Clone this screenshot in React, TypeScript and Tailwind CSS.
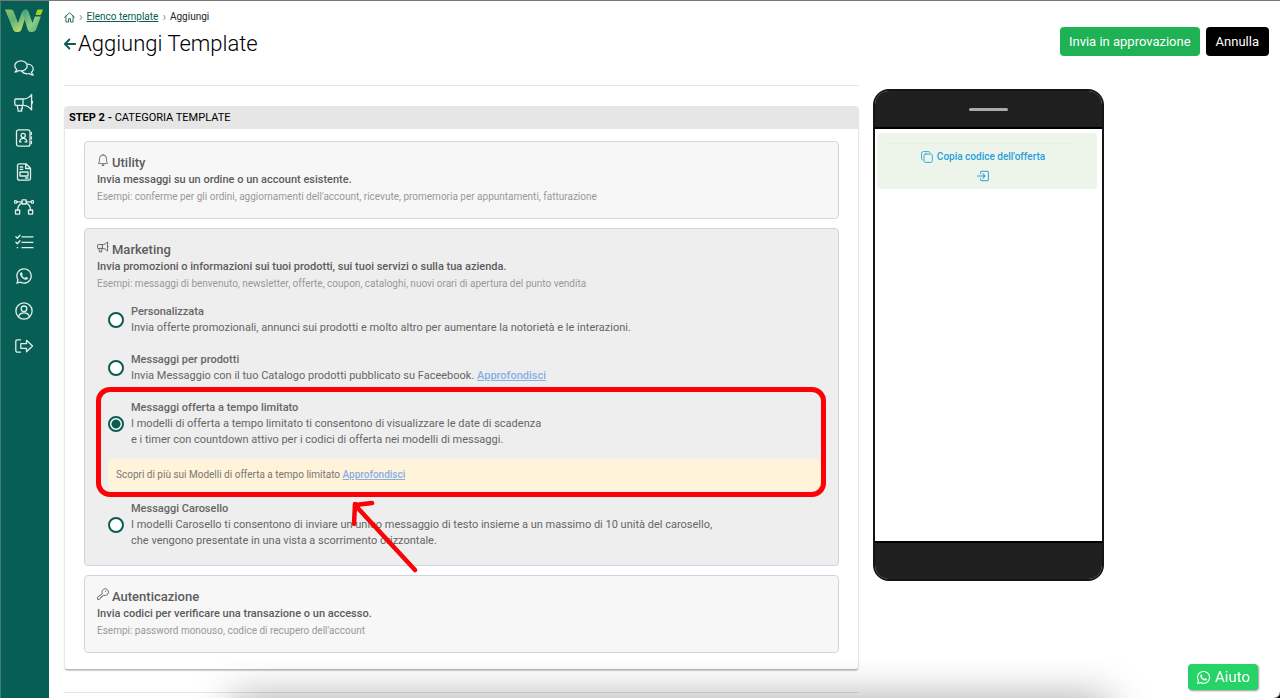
import type { ReactNode } from 'react';
import { FaWhatsapp } from 'react-icons/fa';
import { BsBell } from 'react-icons/bs';

function Glyph({ children, className }: { children: ReactNode; className: string }) {
  return (
    <svg viewBox="0 0 20 20" fill="none" stroke="currentColor" strokeLinecap="round" strokeLinejoin="round" className={className} aria-hidden="true">
      {children}
    </svg>
  );
}

const line = 'size-5 stroke-[1.3]';

function Megaphone({ className }: { className: string }) {
  return (
    <Glyph className={className}>
      <path d="M9 6H1.800a1 1 0 0 0-1 1v4.300a1 1 0 0 0 1 1H9M9 6v6.300M9 6c3.300 0 6.600-1.600 8.600-4.500v15.400c-2-2.900-5.300-4.600-8.600-4.600M17.600 7.500c1.200.4 1.200 2.800 0 3.200M3.200 12.400l1 5.800h3.500l-.5-2.400h1.200l-.3-3.400" />
    </Glyph>
  );
}

const menu: { label: string; icon: ReactNode }[] = [
  {
    label: 'Conversazioni',
    icon: (
      <Glyph className={line}>
        <path d="M1 14c1-.8 1.500-1.600 1.700-2.600C1.500 10.400.8 9.200.8 7.800.8 4.900 3.600 2.800 7 2.800s6.200 2.100 6.200 5-2.800 5-6.200 5c-.8 0-1.500-.1-2.200-.3C3.700 13.400 2.400 14 1 14Z" />
        <path d="M13.800 6.200c3 .2 5.400 2.100 5.400 4.700 0 1.300-.6 2.500-1.700 3.400.2 1 .8 1.900 1.700 2.700-1.500 0-2.900-.6-4-1.500-.7.2-1.300.3-2 .3-2.400 0-4.400-1-5.400-2.700" />
      </Glyph>
    ),
  },
  { label: 'Campagne', icon: <Megaphone className={line} /> },
  {
    label: 'Contatti',
    icon: (
      <Glyph className={line}>
        <rect x="2.500" y="1.800" width="13.500" height="16.400" rx="2" />
        <circle cx="9.200" cy="7.500" r="2.100" />
        <path d="M5.600 13.800c.3-2.300 1.600-3.500 3.600-3.500s3.400 1.200 3.700 3.500h-2M5.600 13.800h1.600M17.400 4.500v2M17.400 9v2M17.400 13.500v2" />
      </Glyph>
    ),
  },
  {
    label: 'Template',
    icon: (
      <Glyph className={line}>
        <path d="M5 1.800h7l4.500 4.400v10.300a1.700 1.700 0 0 1-1.700 1.700H5.200a1.700 1.700 0 0 1-1.700-1.700V3.500A1.700 1.700 0 0 1 5 1.800ZM11.700 2v4.500h4.600M6.200 5h2.500M6.200 7.400h2.500M6 10h8v4H6zM11.500 16h2.500" />
      </Glyph>
    ),
  },
  {
    label: 'Flussi',
    icon: (
      <Glyph className={line}>
        <rect x="8" y="2.800" width="4.200" height="4.200" rx=".5" />
        <rect x="1.500" y="13" width="4.200" height="4.200" rx=".5" />
        <rect x="14.500" y="13" width="4.200" height="4.200" rx=".5" />
        <circle cx="1.600" cy="4.900" r="1.300" />
        <circle cx="18.500" cy="4.900" r="1.300" />
        <path d="M3 4.900h5M12.200 4.900h5M8 6.200C5.200 7.400 3.600 9.700 3.600 13M12.200 6.200c2.800 1.200 4.400 3.500 4.400 6.800" />
      </Glyph>
    ),
  },
  {
    label: 'Attività',
    icon: (
      <Glyph className={line}>
        <path d="M8 4.800h11M8 10.300h11M8 15.700h11M1.800 4.600l1.500 1.600 2.700-3M1.800 10.100l1.500 1.600L6 8.700M3.300 15.700h.4" />
      </Glyph>
    ),
  },
  { label: 'WhatsApp', icon: <FaWhatsapp className="size-[18px]" /> },
  {
    label: 'Profilo',
    icon: (
      <Glyph className={line}>
        <circle cx="10" cy="10" r="8.100" />
        <circle cx="10" cy="7.800" r="2.800" />
        <path d="M4.500 15.800c.6-2.500 2.600-4 5.500-4s4.900 1.500 5.500 4" />
      </Glyph>
    ),
  },
  {
    label: 'Esci',
    icon: (
      <Glyph className={line}>
        <path d="M6.500 3.800H3.300a1.500 1.500 0 0 0-1.500 1.500v9.400a1.500 1.500 0 0 0 1.500 1.500h3.200M6.800 7.700h5.700V4.300l6 5.700-6 5.700v-3.400H6.800z" />
      </Glyph>
    ),
  },
];

function Logo() {
  return (
    <svg viewBox="0 0 38 24" className="h-6 w-[38px]" aria-hidden="true">
      <defs>
        <linearGradient id="leaf" x1="0" y1="0" x2="0.600" y2="1">
          <stop offset="0" stopColor="#8fc168" />
          <stop offset="0.500" stopColor="#5fb277" />
          <stop offset="1" stopColor="#b5d86c" />
        </linearGradient>
        <linearGradient id="leafDark" x1="0" y1="0" x2="1" y2="1">
          <stop offset="0" stopColor="#3c9d74" />
          <stop offset="0.550" stopColor="#8fcb84" />
          <stop offset="1" stopColor="#4cae84" />
        </linearGradient>
      </defs>
      <path fill="url(#leaf)" d="M0 .5h5.500c1.800 0 2.800.8 3.300 2.300L13 14l3-8.500C17 2.500 18.500.8 21 .5l-1 9-3.500 11c-.6 1.700-1.700 2.500-3.500 2.500h-1.500c-1.700 0-2.800-.8-3.400-2.500L0 .5Z" />
      <path fill="url(#leafDark)" d="M17.500 3.500C18.200 1.500 19.300.5 21 .5c1.200 0 2 .7 2.400 2L27.500 14l2.300-6.500h6L31.300 20c-.8 2.100-2 3-4 3h-1c-2 0-3.100-.9-3.700-2.800L17.500 3.500Z" />
      <path fill="#a9cf1f" d="M33.500.5H38l-1.500 4c-.4 1-1 1.500-2 1.500h-4L32 1.600c.3-.7.800-1.100 1.500-1.100z" />
    </svg>
  );
}

function CategoryCard({ icon, title, description, examples, tone, children }: { icon: ReactNode; title: string; description: string; examples: string; tone: string; children?: ReactNode }) {
  return (
    <section className={`rounded border border-[#cfd5de] px-3 pt-3 ${tone}`}>
      <h2 className="flex h-[18px] items-start gap-[3px] text-[13px] font-medium leading-[18px] text-[#5c5c5c]">
        {icon}
        {title}
      </h2>
      <p className="text-[11px] font-medium leading-4 text-[#5c5c5c]">{description}</p>
      <p className="text-[10px] leading-[18px] text-[#999]">{examples}</p>
      {children}
    </section>
  );
}

function Option({ id, title, checked, children }: { id: string; title: string; checked?: boolean; children: ReactNode }) {
  return (
    <div className="flex items-center gap-[7px]">
      <input
        type="radio"
        name="tipo"
        id={id}
        defaultChecked={checked}
        className="size-4 shrink-0 appearance-none rounded-full border-2 border-[#0a5c50] bg-white checked:bg-[radial-gradient(circle,#0a5c50_0_4px,white_5px)]"
      />
      <label htmlFor={id} className="text-[11px] leading-4 text-[#666]">
        <span className="block font-medium">{title}</span>
        {children}
      </label>
    </div>
  );
}

function More() {
  return (
    <a href="#approfondisci" className="font-medium text-[#86aee6] underline">
      Approfondisci
    </a>
  );
}

function Phone() {
  return (
    <div className="flex h-[492px] w-[231px] flex-col overflow-hidden rounded-[16px] border-2 border-[#151515] bg-white">
      <div className="flex h-[38px] shrink-0 items-center justify-center border-b-2 border-black bg-[#1f1f1f]">
        <span className="h-[3px] w-[39px] rounded-full bg-[#aaa]" />
      </div>
      <div className="flex-1 py-1 pl-[2px] pr-[5px]">
        <div className="flex flex-col items-center gap-1 rounded bg-[#edf5ea] pb-[7px] pl-3 pr-5 pt-[10px] text-[#27a0dc]">
          <a href="#copia" className="flex w-full items-center justify-center gap-1 border-t border-[#e5f1e2] pt-1 text-[10px] font-medium leading-[18px]">
            <Glyph className="size-3 stroke-[1.500]">
              <rect x="5" y="5" width="14" height="14" rx="3" />
              <path d="M2.500 15A2.500 2.500 0 0 1 1 12.700V4a3 3 0 0 1 3-3h8.700A2.500 2.500 0 0 1 15 2.500" />
            </Glyph>
            Copia codice dell&#39;offerta
          </a>
          <Glyph className="size-3 stroke-[1.7]">
            <path d="M6 6V4a2 2 0 0 1 2-2h9a2 2 0 0 1 2 2v12a2 2 0 0 1-2 2H8a2 2 0 0 1-2-2v-2M1 10h12M10 6.500l3.500 3.500-3.500 3.500" />
          </Glyph>
        </div>
      </div>
      <div className="h-[38px] shrink-0 border-t-2 border-black bg-[#1f1f1f]" />
    </div>
  );
}

export default function App() {
  return (
    <div className="flex min-h-screen border-t border-[#777] bg-white font-['Roboto','Liberation_Sans',sans-serif] text-[#212529]">
      <aside className="flex w-[49px] shrink-0 flex-col items-center border-l border-[#3e7d73] bg-[#075e54] pr-[2px] pt-2 text-[#e2efec]">
        <a href="#home" aria-label="Home">
          <Logo />
        </a>
        <nav className="mt-[18px] flex h-[312px] flex-col">
          {menu.map((item) => (
            <a key={item.label} href={`#${item.label}`} aria-label={item.label} className="flex flex-1 items-center justify-center">
              {item.icon}
            </a>
          ))}
        </nav>
      </aside>

      <main className="min-w-0 flex-1 pl-[15px] pr-[11px]">
        <header className="flex items-start justify-between pt-2">
          <div>
            <nav className="flex h-4 items-center gap-1 text-[10px] leading-4">
              <a href="#home" aria-label="Home" className="text-[#0a5c50]">
                <Glyph className="size-[11px] stroke-[1.6]">
                  <path d="M1 9.500 10 1.500l9 8M3.500 7.500v10.700h4.700v-6h3.600v6h4.700V7.500" />
                </Glyph>
              </a>
              <span className="text-xs leading-3 text-[#888]">›</span>
              <a href="#elenco" className="text-[#0a5c50] underline">Elenco template</a>
              <span className="text-xs leading-3 text-[#888]">›</span>
              <span>Aggiungi</span>
            </nav>
            <h1 className="flex items-center gap-[2px] text-[22px] font-light leading-[38px] text-black">
              <a href="#indietro" aria-label="Indietro" className="text-[#0a5c50]">
                <Glyph className="size-3 stroke-[3]">
                  <path d="M19 10H2M9 2.500 1.500 10 9 17.500" />
                </Glyph>
              </a>
              Aggiungi Template
            </h1>
          </div>
          <div className="flex gap-[6px] pt-[18px] text-[13px] leading-[29px] text-white">
            <button type="button" className="rounded bg-[#1fb255] px-[9px]">Invia in approvazione</button>
            <button type="button" className="rounded bg-black px-[10px]">Annulla</button>
          </div>
        </header>

        <div className="mt-[22px] grid grid-cols-[795fr_396fr] gap-[14px]">
          <div>
            <hr className="border-[#e4e5e7]" />
            <div className="mt-5 overflow-hidden rounded border border-[#e6e6e6] border-b-[#bbb] pb-4 shadow-[0_1px_1px_#ccc]">
              <h2 className="bg-[#e6e6e6] px-1 text-[11px] leading-[22px] text-black">
                <b>STEP 2 -</b> CATEGORIA TEMPLATE
              </h2>
              <div className="flex flex-col gap-[9px] px-[19px] pt-3">
                <CategoryCard
                  tone="bg-[#f7f7f7] pb-3"
                  icon={<BsBell className="size-3" />}
                  title="Utility"
                  description="Invia messaggi su un ordine o un account esistente."
                  examples="Esempi: conferme per gli ordini, aggiornamenti dell'account, ricevute, promemoria per appuntamenti, fatturazione"
                />
                <CategoryCard
                  tone="bg-[#eeeeee] pb-4"
                  icon={<Megaphone className="size-3 stroke-[1.500]" />}
                  title="Marketing"
                  description="Invia promozioni o informazioni sui tuoi prodotti, sui tuoi servizi o sulla tua azienda."
                  examples="Esempi: messaggi di benvenuto, newsletter, offerte, coupon, cataloghi, nuovi orari di apertura del punto vendita"
                >
                  <div className="mt-[11px] flex flex-col gap-4 pl-[11px] pr-[5px]">
                    <Option id="personalizzata" title="Personalizzata">
                      Invia offerte promozionali, annunci sui prodotti e molto altro per aumentare la notorietà e le interazioni.
                    </Option>
                    <Option id="prodotti" title="Messaggi per prodotti">
                      Invia Messaggio con il tuo Catalogo prodotti pubblicato su Faceebook. <More />
                    </Option>
                    <div className="relative">
                      <Option id="offerta" title="Messaggi offerta a tempo limitato" checked>
                        I modelli di offerta a tempo limitato ti consentono di visualizzare le date di scadenza
                        <br />e i timer con countdown attivo per i codici di offerta nei modelli di messaggi.
                      </Option>
                      <p className="mt-[11px] rounded bg-[#fff3d9] px-2 text-[10px] leading-[31px] text-[#777]">
                        Scopri di più sui Modelli di offerta a tempo limitato <More />
                      </p>
                      <div className="pointer-events-none absolute -bottom-[7px] -left-3 -right-[5px] -top-[13px] rounded-[14px] border-[5px] border-[#fb0207]" />
                      <svg viewBox="0 0 70 75" className="pointer-events-none absolute left-[242px] top-full mt-2 h-[75px] w-[70px]" fill="none" stroke="#fb0207" strokeWidth="4.500" strokeLinecap="round" aria-hidden="true">
                        <path d="M65 72 5 7M4 26 5 6M5 7 22 5" />
                      </svg>
                    </div>
                    <div className="-mt-[5px]">
                      <Option id="carosello" title="Messaggi Carosello">
                        I modelli Carosello ti consentono di inviare un unico messaggio di testo insieme a un massimo di 10 unità del carosello,
                        <br />
                        che vengono presentate in una vista a scorrimento orizzontale.
                      </Option>
                    </div>
                  </div>
                </CategoryCard>
                <CategoryCard
                  tone="bg-[#f7f7f7] pb-3"
                  icon={
                    <Glyph className="size-3 stroke-[1.500]">
                      <path d="M8.500 9a5.500 5.500 0 1 1 3 3l-1.500 1.400-1.800.2-.3 1.900-1.900.3-.3 1.900-1.500 1.300H1V16zM14 5.500h.5" />
                    </Glyph>
                  }
                  title="Autenticazione"
                  description="Invia codici per verificare una transazione o un accesso."
                  examples="Esempi: password monouso, codice di recupero dell'account"
                />
              </div>
            </div>
            <hr className="mt-[22px] border-[#e4e5e7]" />
          </div>
          <div className="pt-1">
            <Phone />
          </div>
        </div>
      </main>

      <div className="pointer-events-none fixed inset-x-0 bottom-0 h-10 overflow-hidden">
        <div className="absolute -bottom-10 left-[230px] right-[170px] h-10 rounded-lg shadow-[0_0_40px_rgba(0,0,0,0.35)]" />
        <div className="absolute bottom-0 right-0 size-[6px] bg-[radial-gradient(circle_at_0_0,transparent_5px,black_7px)]" />
      </div>
      <a href="#aiuto" className="fixed bottom-2 right-[22px] flex h-[26px] items-center gap-1 rounded bg-[#25d366] px-2 text-[15px] text-white shadow-[1px_1px_2px_#999]">
        <FaWhatsapp className="size-[15px]" />
        Aiuto
      </a>
    </div>
  );
}
